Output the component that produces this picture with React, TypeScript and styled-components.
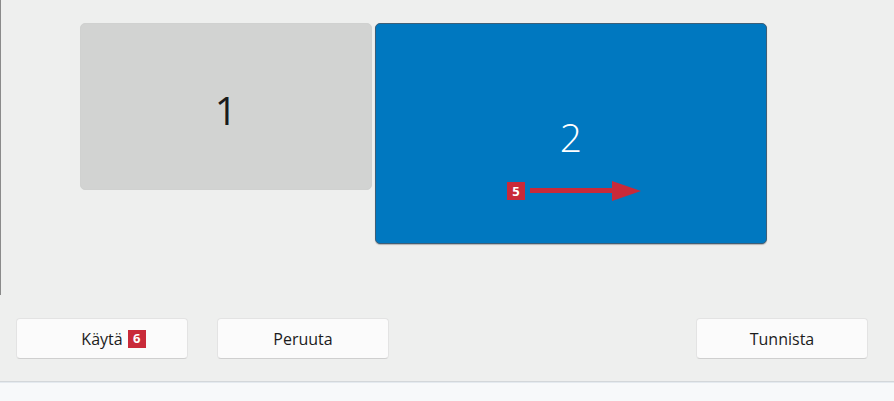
import styled, { createGlobalStyle } from 'styled-components';

const GlobalStyle = createGlobalStyle`
  html, body {
    margin: 0;
    padding: 0;
    background: #eeefee;
  }
  body {
    font-family: "Open Sans", "Noto Sans", "Liberation Sans", sans-serif;
    color: #1b1b1b;
  }
`;

export default function App() {
  return (
    <>
      <GlobalStyle />
      <Window>
        <Canvas>
          <Monitor $variant="idle" style={{ width: 292, height: 167 }}>
            <MonitorNumber $light={false}>1</MonitorNumber>
          </Monitor>
          <Monitor $variant="selected" style={{ width: 392, height: 221 }}>
            <MonitorNumber $light>2</MonitorNumber>
            <Arrow>
              <Badge>5</Badge>
              <svg width="112" height="20" viewBox="0 0 112 20">
                <rect x="0" y="7" width="84" height="5" fill="#c92a39" />
                <polygon points="82,0 111,10 82,20" fill="#c92a39" />
              </svg>
            </Arrow>
          </Monitor>
        </Canvas>
        <ButtonRow>
          <Button>
            <Label>
              Käytä
              <InlineBadge>6</InlineBadge>
            </Label>
          </Button>
          <Button>Peruuta</Button>
          <Spacer />
          <Button>Tunnista</Button>
        </ButtonRow>
      </Window>
      <Footer />
    </>
  );
}

const Window = styled.div`
  display: flex;
  flex-direction: column;
  height: 382px;
  box-sizing: border-box;
  border-bottom: 1px solid #d3d7da;
`;

const Canvas = styled.div`
  display: flex;
  align-items: flex-start;
  gap: 3px;
  height: 295px;
  box-sizing: border-box;
  padding: 23px 0 0 79px;
  border-left: 1px solid #8a8a8a;
`;

const Monitor = styled.div<{ $variant: 'idle' | 'selected' }>`
  position: relative;
  display: flex;
  align-items: center;
  justify-content: center;
  box-sizing: border-box;
  border-radius: 5px;
  background: ${({ $variant }) => ($variant === 'selected' ? '#0078c0' : '#d2d3d2')};
  border: 1px solid ${({ $variant }) => ($variant === 'selected' ? '#3d5f78' : '#d0d1d0')};
  ${({ $variant }) => ($variant === 'selected' ? 'box-shadow: 0 1px 1px rgba(0,0,0,0.25);' : '')}
`;

const MonitorNumber = styled.span<{ $light: boolean }>`
  margin-top: 6px;
  font-size: 39px;
  line-height: 1;
  font-weight: ${({ $light }) => ($light ? 300 : 400)};
  color: ${({ $light }) => ($light ? '#ffffff' : '#1a1a1a')};
`;

const Arrow = styled.div`
  position: absolute;
  left: 131px;
  top: 157px;
  display: flex;
  align-items: center;
  gap: 5px;
`;

const Badge = styled.span`
  display: inline-flex;
  align-items: center;
  justify-content: center;
  width: 18px;
  height: 18px;
  background: #c92a39;
  color: #ffffff;
  font-family: "Open Sans", "Noto Sans", sans-serif;
  font-weight: 700;
  font-size: 13px;
  line-height: 1;
`;

const ButtonRow = styled.div`
  display: flex;
  align-items: center;
  gap: 29px;
  padding: 23px 26px 0 16px;
`;

const Spacer = styled.div`
  flex: 1;
`;

const Button = styled.button`
  display: flex;
  align-items: center;
  justify-content: center;
  width: 172px;
  height: 41px;
  padding: 0;
  background: #fbfbfb;
  border: 1px solid #e3e3e3;
  border-bottom-color: #cfcfcf;
  border-radius: 4px;
  font-family: "Open Sans", "Noto Sans", "Liberation Sans", sans-serif;
  font-size: 16px;
  color: #1b1b1b;
  cursor: pointer;
`;

const Label = styled.span`
  position: relative;
`;

const InlineBadge = styled(Badge)`
  position: absolute;
  left: calc(100% + 5px);
  top: 50%;
  transform: translateY(-50%);
`;

const Footer = styled.div`
  height: 19px;
  background: #f7f9fa;
  border-top: 1px solid #e4eaef;
`;
